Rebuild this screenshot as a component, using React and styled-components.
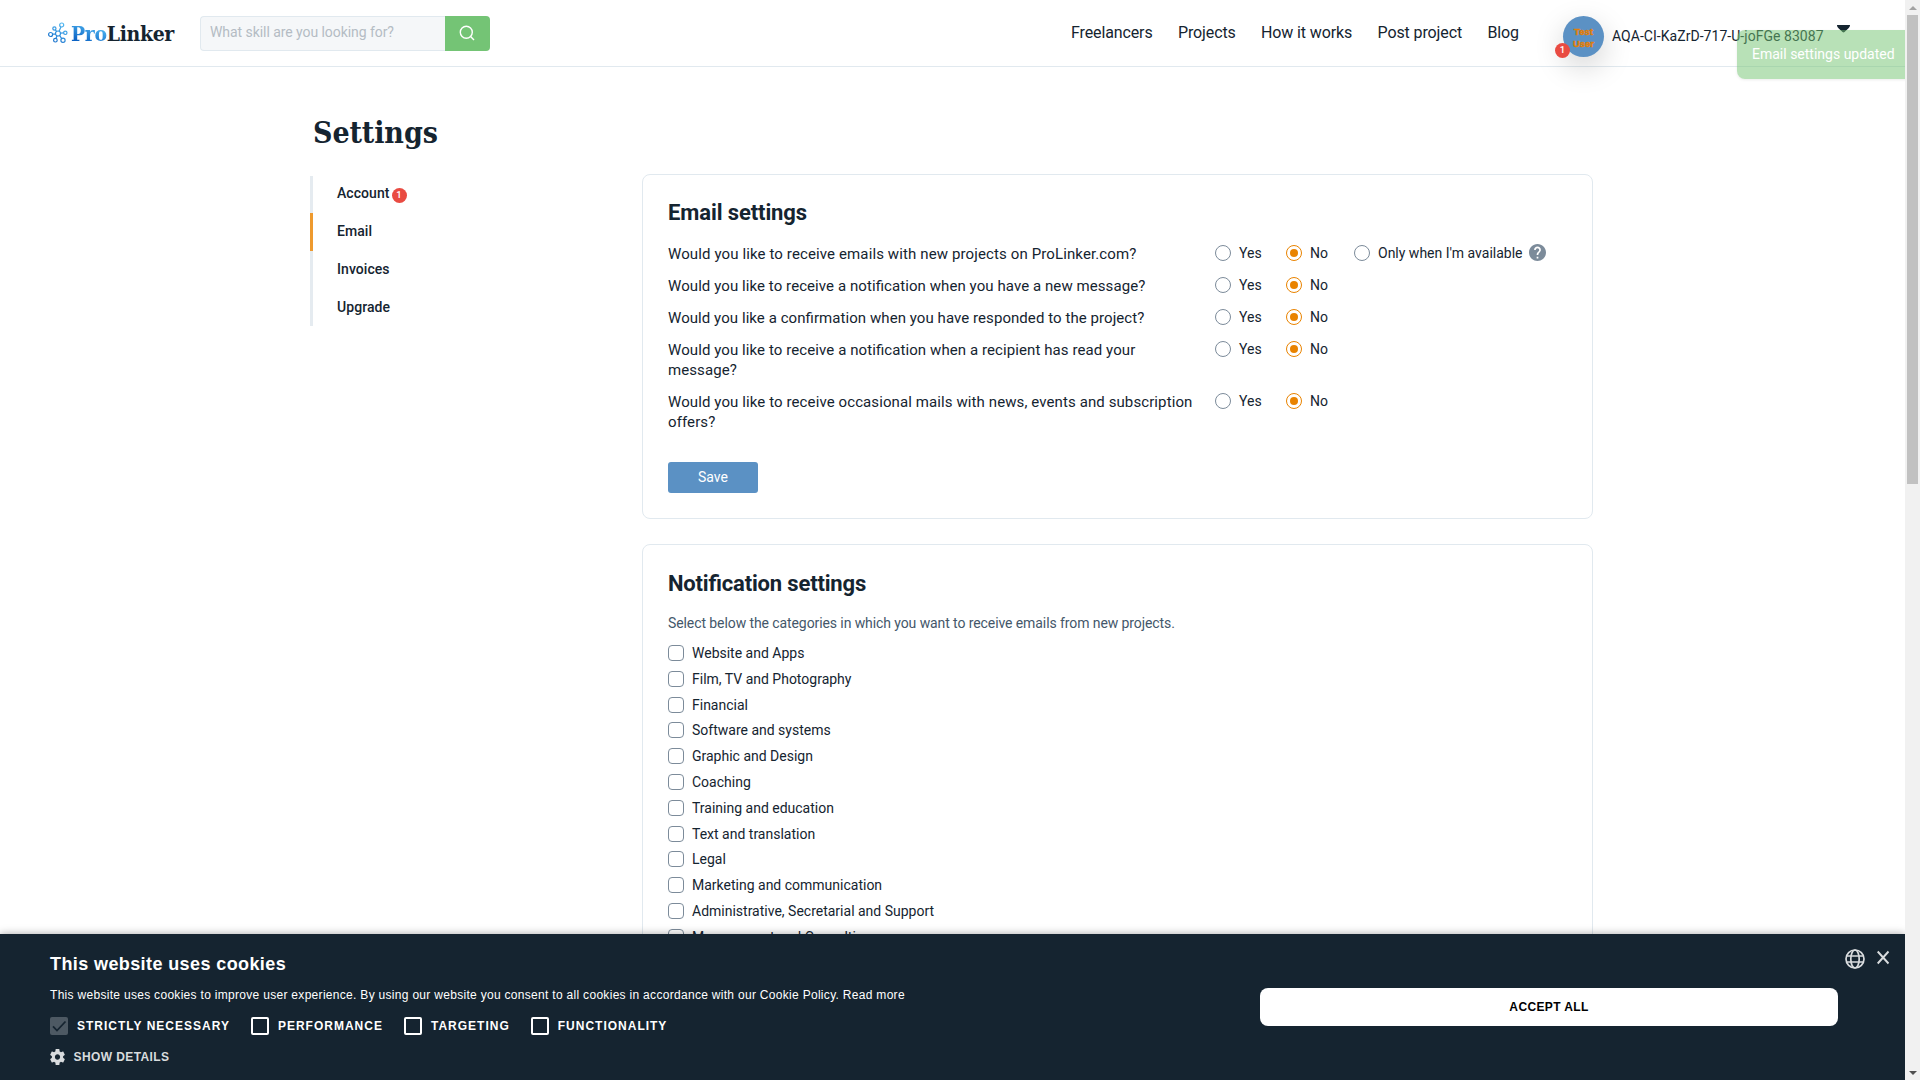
import React from "react";
import styled, { createGlobalStyle } from "styled-components";

const ink = "#152430";
const line = "#e1e9ef";

const Global = createGlobalStyle`
  * { box-sizing: border-box; }
  body { margin: 0; background: #fff; overflow: hidden; color: ${ink};
    font-family: Roboto, "Liberation Sans", sans-serif; font-size: 14px; font-feature-settings: "liga" 1; }
  button, input { font: inherit; }
`;

const Screen = styled.div`
  display: grid; grid-template-columns: 1905px 15px; width: 1920px; height: 1080px; overflow: hidden;
`;
const Page = styled.div`position: relative; height: 1080px; overflow: hidden;`;

const Header = styled.header`
  display: flex; align-items: flex-start; height: 67px; padding: 16px 0 0 48px; border-bottom: 1px solid ${line};
`;
const Logo = styled.a`
  display: flex; align-items: flex-start; gap: 3px; width: 152px; padding-top: 6px;
`;
const LogoText = styled.span`
  white-space: nowrap; letter-spacing: -0.35px;
  font: 700 21px/23px "Roboto Slab", "DejaVu Serif Condensed", "DejaVu Serif", serif;
`;
const LogoBlue = styled.span`
  background: linear-gradient(20deg, #0b62c4 20%, #52b9f2 80%); background-clip: text; color: transparent;
`;
const Search = styled.form`display: flex; width: 290px; height: 35px;`;
const SearchInput = styled.input`
  width: 245px; height: 35px; padding: 0 9px 3px; border: 1px solid ${line}; border-right: 0;
  border-radius: 4px 0 0 4px; background: #f5f7f9; outline: 0; font-size: 14px; letter-spacing: -0.06px;
  &::placeholder { color: #b4bcc4; opacity: 1; }
`;
const SearchButton = styled.button`
  display: flex; align-items: center; justify-content: center; width: 45px; padding: 0 1px 1px 0; border: 0;
  border-radius: 0 4px 4px 0; background: #74c475;
`;
const Nav = styled.nav`
  display: flex; gap: 25.4px; width: 492px; margin-left: 581px; font-size: 16px; line-height: 34px;
  letter-spacing: -0.12px; white-space: nowrap;
`;
const User = styled.div`display: flex; white-space: nowrap;`;
const Avatar = styled.div`
  position: relative; display: flex; align-items: center; justify-content: center; width: 41px; height: 41px;
  border-radius: 50%; background: #5b91c4; box-shadow: 0 10px 30px rgba(0, 0, 0, 0.18);
  padding-top: 2px;
`;
const AvatarText = styled.span`
  color: #e17f0a; font: 700 9.5px/12px "Liberation Sans", Arial, sans-serif; -webkit-text-stroke: 0.5px #e17f0a;
  text-align: center;
`;
const Badge = styled.span`
  display: inline-block; width: 15px; height: 15px; border-radius: 50%; background: #e94b42; color: #fff;
  font-size: 9.5px; font-weight: 500; line-height: 14px; text-align: center;
`;
const AvatarBadge = styled(Badge)`position: absolute; left: -8px; top: 27px;`;
const UserName = styled.span`margin-left: 8px; width: 225px; line-height: 40px; letter-spacing: 0.04px;`;
const Caret = styled.svg`margin-top: 9px;`;

const Toast = styled.div`
  position: absolute; left: 1737px; top: 30px; width: 190px; height: 49px; padding-left: 15px;
  border-radius: 8px; background: rgba(114, 195, 112, 0.5); box-shadow: 0 1px 3px rgba(0, 0, 0, 0.08);
  color: #fff; line-height: 49px; white-space: nowrap;
`;

const Main = styled.main`width: 1283px; margin: 0 0 0 310px;`;
const PageTitle = styled.h1`
  margin: 0; padding: 43px 0 0 3px; height: 107px; letter-spacing: -0.1px;
  font: 700 30px/46px "Roboto Slab", "DejaVu Serif Condensed", "DejaVu Serif", serif;
`;
const Columns = styled.div`display: grid; grid-template-columns: 332px 951px; align-items: start;`;
const Side = styled.ul`
  margin: 2px 0 0; padding: 0; list-style: none; width: 250px;
`;
const SideItem = styled.li`
  display: flex; align-items: center; gap: 2px; height: ${(p) => p.$h}px; padding: 0 0 ${(p) => p.$pb || 2}px 24px;
  border-left: 3px solid ${(p) => (p.$active ? "#ee9a2e" : "#e5ebf0")}; font-weight: 500; letter-spacing: 0.06px;
`;
const SideBadge = styled(Badge)`margin-top: 5px;`;

const Cards = styled.div`display: flex; flex-direction: column; gap: 25px;`;
const Card = styled.section`
  height: ${(p) => p.$h}px; padding: 24px 25px; border: 1px solid ${line}; border-radius: 8px; background: #fff;
`;
const CardTitle = styled.h2`
  margin: 0; padding-top: ${(p) => p.$drop || 0}px; font-size: 22px; line-height: 28px; font-weight: 700;
  letter-spacing: ${(p) => p.$ls}px;
`;

const Questions = styled.div`display: flex; flex-direction: column; gap: 12px; margin-top: 16px;`;
const Question = styled.div`display: grid; grid-template-columns: 547px 1fr; align-items: start;`;
const Ask = styled.p`
  margin: 1px 0 -1px; width: 530px; font-size: 15px; line-height: 20px; letter-spacing: ${(p) => p.$ls}px;
`;
const Options = styled.div`display: flex; align-items: center; height: 20px;`;
const Option = styled.label`
  display: flex; align-items: center; gap: 8px; width: ${(p) => p.$w}px; white-space: nowrap;
`;
const Radio = styled.span`
  display: flex; align-items: center; justify-content: center; width: 16px; height: 16px; border-radius: 50%;
  border: 1px solid ${(p) => (p.$on ? "#e98300" : "#7c8b9a")};
  &::after { content: ""; width: 8px; height: 8px; border-radius: 50%; background: ${(p) => (p.$on ? "#e98300" : "none")}; }
`;
const Help = styled.svg`margin: -1px 0 0 -2px;`;
const Save = styled.button`
  display: block; width: 90px; height: 31px; margin-top: 31px; padding: 0 0 1px; border: 0; border-radius: 3px;
  background: #5b91c4; color: #fff; font-size: 14px;
`;
const Hint = styled.p`margin: 15px 0 0; color: #44576a; line-height: 20px; letter-spacing: -0.09px;`;
const Checks = styled.div`margin-top: 7.1px;`;
const Check = styled.label`display: flex; align-items: center; gap: 8px; height: 25.8px; line-height: 20px;`;
const Box = styled.span`width: 16px; height: 16px; border: 1px solid #7c8b9a; border-radius: 4px;`;

const Cookie = styled.aside`
  position: absolute; left: 0; bottom: 0; display: flex; align-items: flex-start; width: 1905px; height: 146px;
  padding: 18px 15px 0 50px; background: ${ink}; box-shadow: 0 0 8px rgba(0, 0, 0, 0.35); color: #fff;
  font-family: "Liberation Sans", Arial, sans-serif; font-size: 12px; white-space: nowrap;
`;
const CookieBody = styled.div`width: 1210px;`;
const CookieTitle = styled.h3`margin: 0; font-size: 18px; line-height: 24px; font-weight: 700; letter-spacing: 0.4px;`;
const CookieText = styled.p`margin: 10px 0 0; line-height: 18px; letter-spacing: 0.3px;`;
const CookieOptions = styled.div`
  display: flex; gap: 21px; margin-top: 13px; font-weight: 700; letter-spacing: 1px; line-height: 18px;
`;
const CookieOption = styled.label`display: flex; gap: 9px;`;
const CookieBox = styled.span`
  display: flex; width: 18px; height: 18px; border-radius: 2px;
  border: ${(p) => (p.$locked ? "0" : "2px solid #fff")}; background: ${(p) => (p.$locked ? "#4d5963" : "none")};
`;
const Details = styled.div`
  display: flex; align-items: center; gap: 8.5px; margin-top: 14px; color: #d9dcde; font-weight: 700; letter-spacing: 0.4px;
`;
const Accept = styled.button`
  width: 578px; height: 38px; margin-top: 36px; padding: 0; border: 0; border-radius: 8px; background: #fff;
  color: #000; font-size: 12px; font-weight: 700; letter-spacing: 0.37px;
`;
const Corner = styled.div`display: flex; gap: 12px; margin-left: 7px; margin-top: -3px;`;

const Scroll = styled.div`
  display: flex; flex-direction: column; align-items: center; height: 1080px; background: #f1f1f1;
`;
const Arrow = styled.span`
  width: 0; height: 0; margin: 6px 0 5px; border: 4px solid transparent; border-top-width: 0;
  border-bottom-color: #a3a3a3;
`;
const ArrowDown = styled.span`
  width: 0; height: 0; margin: auto 0 5px; border: 4px solid transparent; border-bottom-width: 0;
  border-top-color: #505050;
`;
const Thumb = styled.span`width: 11px; height: 469px; background: #c1c1c1;`;

const questions = [
  { text: "Would you like to receive emails with new projects on ProLinker.com?", ls: 0.119, extra: true },
  { text: "Would you like to receive a notification when you have a new message?", ls: 0.077 },
  { text: "Would you like a confirmation when you have responded to the project?", ls: 0.065 },
  { text: "Would you like to receive a notification when a recipient has read your message?", ls: 0.085 },
  { text: "Would you like to receive occasional mails with news, events and subscription offers?", ls: 0.1 },
];
const categories = ["Website and Apps", "Film, TV and Photography", "Financial", "Software and systems",
  "Graphic and Design", "Coaching", "Training and education", "Text and translation", "Legal",
  "Marketing and communication", "Administrative, Secretarial and Support", "Management and Consulting"];

const LogoMark = () => (
  <svg width="20" height="21" viewBox="0 0 20 21" fill="none" stroke="url(#lg)" strokeWidth="1.2">
    <defs>
      <linearGradient id="lg" x1="0" y1="21" x2="14" y2="0" gradientUnits="userSpaceOnUse">
        <stop offset="0" stopColor="#0b62c4" /><stop offset="1" stopColor="#52b9f2" />
      </linearGradient>
    </defs>
    <circle cx="10" cy="11.5" r="2.5" /><circle cx="2.6" cy="12.5" r="2" /><circle cx="6.4" cy="6.5" r="1.6" />
    <circle cx="13.7" cy="3" r="2" /><circle cx="17.3" cy="10.8" r="1.7" /><circle cx="15" cy="18.2" r="2.1" />
    <circle cx="7.4" cy="18.2" r="1.8" />
    <path d="M4.6 12.2h2.9M7.4 7.8l1.3 1.7M12.9 4.9l-1.8 4.3M15.6 10.9l-3.1.3M13.7 16.6l-2-3.1M8 16.4l1-2.7" />
  </svg>
);

export default function App() {
  return (
    <Screen>
      <Global />
      <Page>
        <Header>
          <Logo>
            <LogoMark />
            <LogoText><LogoBlue>Pro</LogoBlue>Linker</LogoText>
          </Logo>
          <Search>
            <SearchInput placeholder="What skill are you looking for?" />
            <SearchButton type="button">
              <svg width="16" height="16" viewBox="0 0 16 16" fill="none" stroke="#fff" strokeWidth="1.4">
                <circle cx="7.3" cy="7.3" r="6" /><path d="M11.6 11.6l3.4 3.4" />
              </svg>
            </SearchButton>
          </Search>
          <Nav>
            {["Freelancers", "Projects", "How it works", "Post project", "Blog"].map((t) => <span key={t}>{t}</span>)}
          </Nav>
          <User>
            <Avatar><AvatarText>Test<br />User</AvatarText><AvatarBadge>1</AvatarBadge></Avatar>
            <UserName>AQA-CI-KaZrD-717-U-joFGe 83087</UserName>
            <Caret width="13" height="8" viewBox="0 0 13 8"><path d="M0 0h13c0 1.5-.6 2.4-1.5 3.2L7.5 7q-1 .8-2 0L1.5 3.2C.6 2.4 0 1.5 0 0z" fill={ink} /></Caret>
          </User>
        </Header>
        <Main>
          <PageTitle>Settings</PageTitle>
          <Columns>
            <Side>
              <SideItem $h={37} $pb={3}>Account<SideBadge>1</SideBadge></SideItem>
              <SideItem $h={38} $active>Email</SideItem>
              <SideItem $h={38}>Invoices</SideItem>
              <SideItem $h={37}>Upgrade</SideItem>
            </Side>
            <Cards>
              <Card $h={345}>
                <CardTitle $ls={-0.1}>Email settings</CardTitle>
                <Questions>
                  {questions.map((q) => (
                    <Question key={q.text}>
                      <Ask $ls={q.ls}>{q.text}</Ask>
                      <Options>
                        <Option $w={71}><Radio />Yes</Option>
                        <Option $w={68}><Radio $on />No</Option>
                        {q.extra && (
                          <Option>
                            <Radio />Only when I'm available
                            <Help width="17" height="17" viewBox="2 2 20 20" fill="#7c8b9a">
                              <path d="M12 2C6.48 2 2 6.48 2 12s4.48 10 10 10 10-4.48 10-10S17.52 2 12 2zm1 17h-2v-2h2v2zm2.07-7.75l-.9.92C13.45 12.9 13 13.5 13 15h-2v-.5c0-1.1.45-2.1 1.17-2.83l1.24-1.26c.37-.36.59-.86.59-1.41 0-1.1-.9-2-2-2s-2 .9-2 2H8c0-2.21 1.79-4 4-4s4 1.79 4 4c0 .88-.36 1.68-.93 2.25z" />
                            </Help>
                          </Option>
                        )}
                      </Options>
                    </Question>
                  ))}
                </Questions>
                <Save>Save</Save>
              </Card>
              <Card $h={600}>
                <CardTitle $drop={1} $ls={-0.17}>Notification settings</CardTitle>
                <Hint>Select below the categories in which you want to receive emails from new projects.</Hint>
                <Checks>
                  {categories.map((c) => <Check key={c}><Box />{c}</Check>)}
                </Checks>
              </Card>
            </Cards>
          </Columns>
        </Main>
        <Toast>Email settings updated</Toast>
        <Cookie>
          <CookieBody>
            <CookieTitle>This website uses cookies</CookieTitle>
            <CookieText>This website uses cookies to improve user experience. By using our website you consent to all cookies in accordance with our Cookie Policy. Read more</CookieText>
            <CookieOptions>
              <CookieOption>
                <CookieBox $locked>
                  <svg width="18" height="18" viewBox="0 0 18 18" fill="none" stroke={ink} strokeWidth="1.8"><path d="M3 9.3l4 4.2 8.5-9" /></svg>
                </CookieBox>STRICTLY NECESSARY
              </CookieOption>
              {["PERFORMANCE", "TARGETING", "FUNCTIONALITY"].map((t) => <CookieOption key={t}><CookieBox />{t}</CookieOption>)}
            </CookieOptions>
            <Details>
              <svg width="15" height="16" viewBox="2 2 20 20" preserveAspectRatio="none" fill="#d9dcde">
                <path d="M19.43 12.98c.04-.32.07-.64.07-.98s-.03-.66-.07-.98l2.11-1.65c.19-.15.24-.42.12-.64l-2-3.46c-.12-.22-.39-.3-.61-.22l-2.49 1c-.52-.4-1.08-.73-1.69-.98l-.38-2.65A.488.488 0 0 0 14 2h-4c-.25 0-.46.18-.49.42l-.38 2.65c-.61.25-1.17.59-1.69.98l-2.49-1c-.23-.09-.49 0-.61.22l-2 3.46c-.13.22-.07.49.12.64l2.11 1.65c-.04.32-.07.65-.07.98s.03.66.07.98l-2.11 1.65c-.19.15-.24.42-.12.64l2 3.46c.12.22.39.3.61.22l2.49-1c.52.4 1.08.73 1.69.98l.38 2.65c.03.24.24.42.49.42h4c.25 0 .46-.18.49-.42l.38-2.65c.61-.25 1.17-.59 1.69-.98l2.49 1c.23.09.49 0 .61-.22l2-3.46c.12-.22.07-.49-.12-.64l-2.11-1.65zM12 15.5c-1.93 0-3.5-1.57-3.5-3.5s1.57-3.5 3.5-3.5 3.5 1.57 3.5 3.5-1.57 3.5-3.5 3.5z" />
              </svg>
              SHOW DETAILS
            </Details>
          </CookieBody>
          <Accept>ACCEPT ALL</Accept>
          <Corner>
            <svg width="20" height="20" viewBox="0 0 20 20" fill="none" stroke="#d9dcde" strokeWidth="1.7">
              <circle cx="10" cy="10" r="9" /><ellipse cx="10" cy="10" rx="4.2" ry="9" />
              <path d="M1.8 7h16.4M1.8 13h16.4" />
            </svg>
            <svg width="13" height="17" viewBox="0 0 13 17" stroke="#d9dcde" strokeWidth="1.9"><path d="M.7 2.5l10.8 12M11.5 2.5l-10.8 12" /></svg>
          </Corner>
        </Cookie>
      </Page>
      <Scroll><Arrow /><Thumb /><ArrowDown /></Scroll>
    </Screen>
  );
}
